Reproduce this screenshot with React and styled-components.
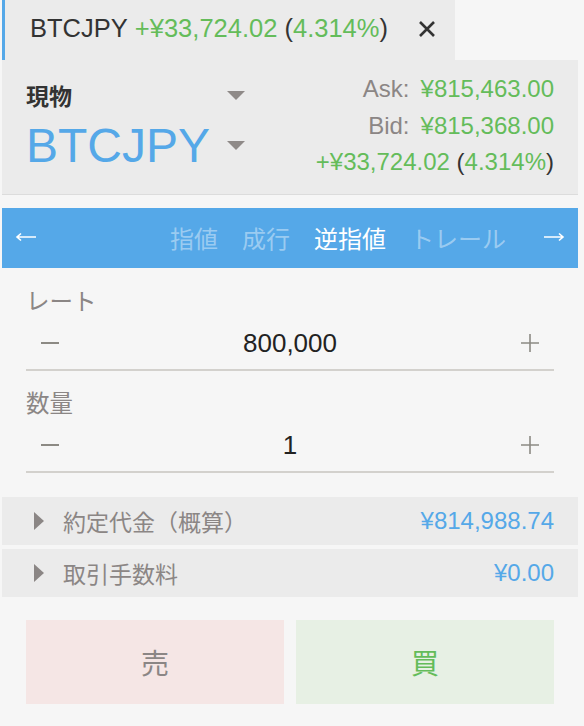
import React from 'react';
import styled, { createGlobalStyle } from 'styled-components';

const blue = '#55a8e8';
const green = '#64bc5a';
const gray = '#8b8685';
const panel = '#ebebeb';
const paper = '#f6f6f6';

const GlobalStyle = createGlobalStyle`
  html, body {
    margin: 0;
    padding: 0;
    background: ${paper};
  }
  body {
    font-family: "Liberation Sans", Arial, "Noto Sans CJK JP", sans-serif;
    color: #333;
  }
  * { box-sizing: border-box; }
`;

const Page = styled.div`
  width: 576px;
  margin-left: 2px;
  min-height: 726px;
  background: ${paper};
`;

const TabBar = styled.div`
  display: flex;
  height: 60px;
`;

const Tab = styled.div`
  display: flex;
  align-items: center;
  width: 453px;
  height: 60px;
  padding: 0 0 3px 25px;
  border-left: 3px solid ${blue};
  background: ${panel};
  font-size: 25.5px;
  white-space: nowrap;
`;

const Up = styled.span`
  color: ${green};
`;

const Close = styled.span`
  display: flex;
  margin-left: 30px;
`;

const Header = styled.div`
  display: flex;
  justify-content: space-between;
  align-items: center;
  height: 135px;
  padding: 0 24px 2px;
  background: ${panel};
  border-bottom: 1px solid #dcdcdc;
`;

const Selector = styled.div`
  width: 219px;
`;

const SelectRow = styled.div`
  display: flex;
  justify-content: space-between;
  align-items: center;
  height: ${p => (p.$big ? '58px' : '34px')};
  margin-top: ${p => (p.$big ? '4px' : '0')};
  font-size: ${p => (p.$big ? '48px' : '23px')};
  font-weight: ${p => (p.$big ? 'normal' : 'bold')};
  color: ${p => (p.$big ? blue : '#333')};
`;

const Caret = styled.span`
  width: 0;
  height: 0;
  border-left: 9px solid transparent;
  border-right: 9px solid transparent;
  border-top: 9px solid #8f8a88;
`;

const Quotes = styled.div`
  text-align: right;
  font-size: 24px;
  line-height: 36.5px;
`;

const QuoteLabel = styled.span`
  color: ${gray};
  margin-right: 11px;
`;

const OrderTypes = styled.div`
  display: flex;
  align-items: center;
  height: 60px;
  margin-top: 13px;
  padding: 0 13px 2px;
  background: ${blue};
`;

const TypeList = styled.div`
  display: flex;
  gap: 24px;
  margin-left: 133px;
`;

const TypeItem = styled.span`
  font-size: 24px;
  color: ${p => (p.$active ? '#fff' : 'rgba(255,255,255,0.42)')};
`;

const ArrowRight = styled.span`
  display: flex;
  margin-left: auto;
`;

const Form = styled.div`
  padding: 17px 24px 24px;
`;

const Field = styled.div`
  & + & {
    margin-top: 16px;
  }
`;

const Label = styled.div`
  height: 34px;
  line-height: 34px;
  font-size: 23.5px;
  color: ${gray};
`;

const Stepper = styled.div`
  display: flex;
  justify-content: space-between;
  align-items: center;
  height: 52px;
  padding: 0 15px 2px;
  border-bottom: 2px solid #d3d1cd;
`;

const StepValue = styled.span`
  font-size: 26px;
  color: #222;
`;

const StepButton = styled.span`
  display: flex;
`;

const Summary = styled.div`
  display: flex;
  align-items: center;
  height: 48px;
  padding: 0 24px 0 32px;
  background: ${panel};
  & + & {
    margin-top: 4px;
  }
`;

const Disclosure = styled.span`
  width: 0;
  height: 0;
  border-top: 9px solid transparent;
  border-bottom: 9px solid transparent;
  border-left: 10px solid ${gray};
`;

const SummaryLabel = styled.span`
  margin-left: 19px;
  font-size: 23px;
  color: ${gray};
`;

const SummaryValue = styled.span`
  margin-left: auto;
  font-size: 24px;
  color: ${blue};
`;

const Actions = styled.div`
  display: grid;
  grid-template-columns: 1fr 1fr;
  gap: 12px;
  padding: 23px 24px 0;
`;

const ActionButton = styled.button`
  height: 84px;
  border: 0;
  padding: 0;
  font-family: inherit;
  font-size: 28px;
  background: ${p => (p.$side === 'buy' ? '#e7f0e4' : '#f5e6e5')};
  color: ${p => (p.$side === 'buy' ? green : gray)};
`;

function Arrow({ flip }) {
  return (
    <svg width="22" height="10" viewBox="0 0 22 10" style={flip ? { transform: 'scaleX(-1)' } : undefined}>
      <path d="M21 5H2M6 1.5L2 5l4 3.5" fill="none" stroke="#fff" strokeWidth="1.6" />
    </svg>
  );
}

function Stepped({ label, value }) {
  return (
    <Field>
      <Label>{label}</Label>
      <Stepper>
        <StepButton>
          <svg width="18" height="18" viewBox="0 0 18 18">
            <path d="M0 9h18" stroke="#8c8a84" strokeWidth="2" />
          </svg>
        </StepButton>
        <StepValue>{value}</StepValue>
        <StepButton>
          <svg width="18" height="18" viewBox="0 0 18 18">
            <path d="M0 9h18M9 0v18" stroke="#8c8a84" strokeWidth="1.6" />
          </svg>
        </StepButton>
      </Stepper>
    </Field>
  );
}

export default function App() {
  return (
    <Page>
      <GlobalStyle />
      <TabBar>
        <Tab>
          BTCJPY&nbsp;<Up>+¥33,724.02</Up>&nbsp;(<Up>4.314%</Up>)
          <Close>
            <svg width="18" height="16" viewBox="0 0 18 16">
              <path d="M2 1l14 14M16 1L2 15" stroke="#333" strokeWidth="2.6" />
            </svg>
          </Close>
        </Tab>
      </TabBar>

      <Header>
        <Selector>
          <SelectRow>
            現物
            <Caret />
          </SelectRow>
          <SelectRow $big>
            BTCJPY
            <Caret />
          </SelectRow>
        </Selector>
        <Quotes>
          <div>
            <QuoteLabel>Ask:</QuoteLabel>
            <Up>¥815,463.00</Up>
          </div>
          <div>
            <QuoteLabel>Bid:</QuoteLabel>
            <Up>¥815,368.00</Up>
          </div>
          <div>
            <Up>+¥33,724.02</Up> (<Up>4.314%</Up>)
          </div>
        </Quotes>
      </Header>

      <OrderTypes>
        <Arrow />
        <TypeList>
          <TypeItem>指値</TypeItem>
          <TypeItem>成行</TypeItem>
          <TypeItem $active>逆指値</TypeItem>
          <TypeItem>トレール</TypeItem>
        </TypeList>
        <ArrowRight>
          <Arrow flip />
        </ArrowRight>
      </OrderTypes>

      <Form>
        <Stepped label="レート" value="800,000" />
        <Stepped label="数量" value="1" />
      </Form>

      <Summary>
        <Disclosure />
        <SummaryLabel>約定代金（概算）</SummaryLabel>
        <SummaryValue>¥814,988.74</SummaryValue>
      </Summary>
      <Summary>
        <Disclosure />
        <SummaryLabel>取引手数料</SummaryLabel>
        <SummaryValue>¥0.00</SummaryValue>
      </Summary>

      <Actions>
        <ActionButton>売</ActionButton>
        <ActionButton $side="buy">買</ActionButton>
      </Actions>
    </Page>
  );
}
